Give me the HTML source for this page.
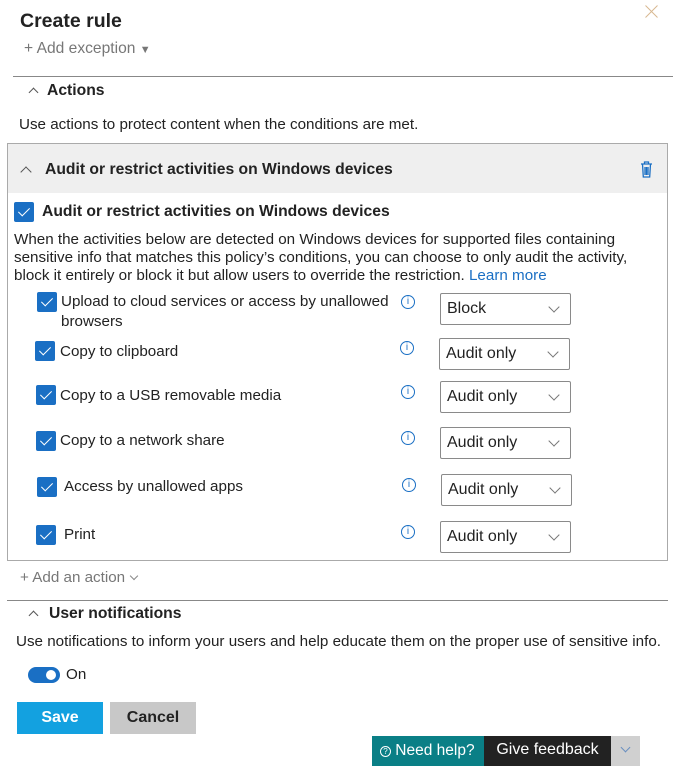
<!DOCTYPE html>
<html><head><meta charset="utf-8"><style>
*{margin:0;padding:0;box-sizing:border-box}
body{width:681px;height:779px;background:#fff;font-family:"Liberation Sans",Arial,sans-serif;font-size:15.2px;color:#222;position:relative;overflow:hidden}
.a{position:absolute;white-space:nowrap;line-height:20px}
.b{font-weight:bold;font-size:15.7px}
.g{color:#777}
.cb{position:absolute;width:20px;height:20px;background:#1a6fc4;border-radius:2px}
.cb:after{content:"";position:absolute;left:7px;top:3px;width:5px;height:10px;border:solid #fff;border-width:0 1.5px 1.5px 0;transform:rotate(45deg)}
.sel{position:absolute;width:131px;height:32px;border:1px solid #8a8a8a;border-radius:2px;background:#fff;font-size:16px;line-height:30px;padding-left:6px}
.sel:after{content:"";position:absolute;right:12px;top:9px;width:7px;height:7px;border:solid #777;border-width:0 1px 1px 0;transform:rotate(45deg)}
.inf{position:absolute;width:14px;height:14px;border:1px solid #1a6fc4;border-radius:50%;color:#1a6fc4;font-size:10px;line-height:12px;text-align:center}
.chev{position:absolute;width:8px;height:8px;border:solid #555;border-width:1px 0 0 1px;transform:rotate(45deg)}
.hr{position:absolute;height:1px;background:#888}
</style></head><body>
<div class="a" style="left:20px;top:10px;font-size:19.5px;line-height:22px;font-weight:bold">Create rule</div>
<svg style="position:absolute;left:645px;top:5px" width="13" height="13"><path d="M0.5 0.5L12.5 12.5M12.5 0.5L0.5 12.5" stroke="#d8b890" stroke-width="1"/></svg>
<div class="a g" style="left:24px;top:39px;font-size:15.6px">+ Add exception <span style="font-size:11px">▼</span></div>
<div class="hr" style="left:13px;top:76px;width:660px"></div>
<div class="chev" style="left:30px;top:89px;width:7px;height:7px"></div>
<div class="a b" style="left:47px;top:81px">Actions</div>
<div class="a" style="left:19px;top:115px">Use actions to protect content when the conditions are met.</div>
<div style="position:absolute;left:7px;top:143px;width:661px;height:418px;border:1px solid #aaa"></div>
<div style="position:absolute;left:8px;top:144px;width:659px;height:49px;background:#efefef"></div>
<div class="chev" style="left:22px;top:168px"></div>
<div class="a b" style="left:45px;top:160px">Audit or restrict activities on Windows devices</div>
<svg style="position:absolute;left:640px;top:161px" width="13" height="17" viewBox="0 0 13 17"><g fill="none" stroke="#1a6fc4" stroke-width="1.3"><path d="M1 3h11M4.5 3V1h4v2M2.5 3l.8 13h6.4l.8-13M5 6v8M6.5 6v8M8 6v8"/></g></svg>
<div class="cb" style="left:14px;top:202px"></div>
<div class="a b" style="left:42px;top:202px">Audit or restrict activities on Windows devices</div>
<div class="a" style="left:14px;top:230px">When the activities below are detected on Windows devices for supported files containing</div>
<div class="a" style="left:14px;top:248px">sensitive info that matches this policy’s conditions, you can choose to only audit the activity,</div>
<div class="a" style="left:14px;top:266px">block it entirely or block it but allow users to override the restriction. <span style="color:#1a6fc4">Learn more</span></div>

<div class="cb" style="left:37px;top:292px"></div>
<div class="a" style="left:61px;top:292px">Upload to cloud services or access by unallowed</div>
<div class="a" style="left:61px;top:312px">browsers</div>
<div class="inf" style="left:401px;top:295px">i</div>
<div class="sel" style="left:440px;top:293px">Block</div>

<div class="cb" style="left:35px;top:341px"></div>
<div class="a" style="left:60px;top:342px">Copy to clipboard</div>
<div class="inf" style="left:400px;top:341px">i</div>
<div class="sel" style="left:439px;top:338px">Audit only</div>

<div class="cb" style="left:36px;top:385px"></div>
<div class="a" style="left:60px;top:386px">Copy to a USB removable media</div>
<div class="inf" style="left:401px;top:385px">i</div>
<div class="sel" style="left:440px;top:381px">Audit only</div>

<div class="cb" style="left:36px;top:431px"></div>
<div class="a" style="left:60px;top:431px">Copy to a network share</div>
<div class="inf" style="left:401px;top:431px">i</div>
<div class="sel" style="left:440px;top:427px">Audit only</div>

<div class="cb" style="left:37px;top:477px"></div>
<div class="a" style="left:64px;top:477px">Access by unallowed apps</div>
<div class="inf" style="left:402px;top:478px">i</div>
<div class="sel" style="left:441px;top:474px">Audit only</div>

<div class="cb" style="left:36px;top:525px"></div>
<div class="a" style="left:64px;top:525px">Print</div>
<div class="inf" style="left:401px;top:525px">i</div>
<div class="sel" style="left:440px;top:521px">Audit only</div>

<div class="a g" style="left:20px;top:568px">+ Add an action <span style="display:inline-block;width:6px;height:6px;border:solid #888;border-width:0 1px 1px 0;transform:rotate(45deg);position:relative;top:-3px;margin-left:2px"></span></div>
<div class="hr" style="left:7px;top:600px;width:661px"></div>
<div class="chev" style="left:30px;top:612px;width:7px;height:7px"></div>
<div class="a b" style="left:49px;top:604px">User notifications</div>
<div class="a" style="left:16px;top:632px">Use notifications to inform your users and help educate them on the proper use of sensitive info.</div>
<div style="position:absolute;left:28px;top:667px;width:32px;height:16px;border-radius:8px;background:#1a6fc4"></div>
<div style="position:absolute;left:46px;top:670px;width:10px;height:10px;border-radius:50%;background:#fff"></div>
<div class="a" style="left:66px;top:665px">On</div>
<div style="position:absolute;left:17px;top:702px;width:86px;height:32px;background:#13a1e0;color:#fff;font-weight:bold;text-align:center;line-height:32px;font-size:16px">Save</div>
<div style="position:absolute;left:110px;top:702px;width:86px;height:32px;background:#c8c8c8;color:#222;font-weight:bold;text-align:center;line-height:32px;font-size:16px">Cancel</div>
<div style="position:absolute;left:372px;top:736px;width:112px;height:30px;background:#0a7f86;color:#fff;line-height:30px;padding-left:8px;font-size:15.5px;white-space:nowrap"><span style="display:inline-block;width:11px;height:11px;border:1px solid #fff;border-radius:50%;font-size:8px;line-height:9px;text-align:center;vertical-align:1px">?</span> Need help?</div>
<div style="position:absolute;left:484px;top:736px;width:127px;height:30px;background:#222;color:#fff;line-height:28px;text-align:center;font-size:16px">Give feedback</div>
<div style="position:absolute;left:611px;top:736px;width:29px;height:30px;background:#d0d0d0"></div>
<div style="position:absolute;left:622px;top:744px;width:7px;height:7px;border:solid #6a8fc0;border-width:0 1px 1px 0;transform:rotate(45deg)"></div>
</body></html>
